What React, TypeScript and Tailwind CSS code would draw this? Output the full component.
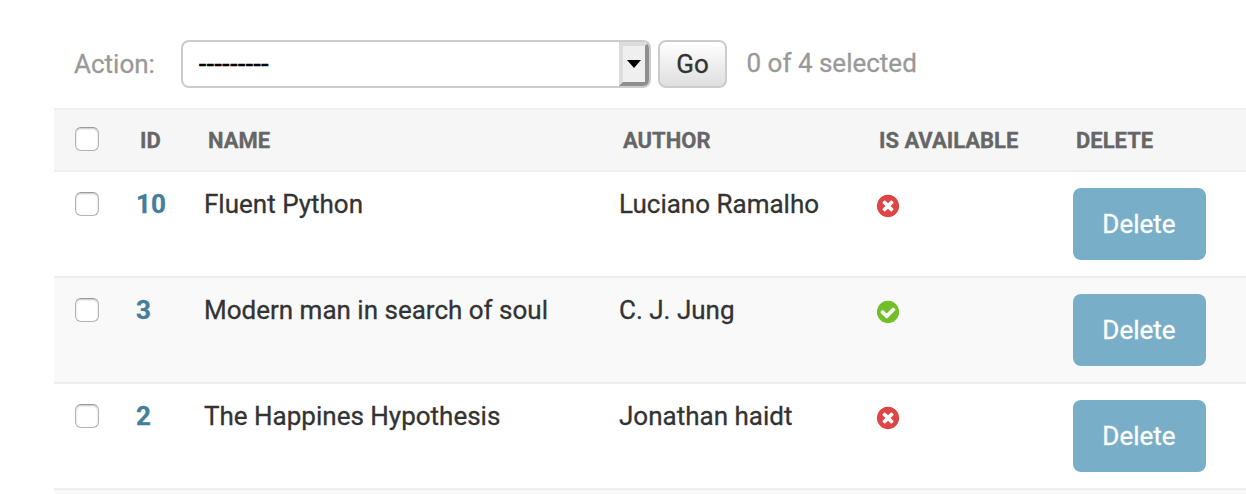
const BOOKS = [
  { id: 10, name: 'Fluent Python', author: 'Luciano Ramalho', available: false },
  { id: 3, name: 'Modern man in search of soul', author: 'C. J. Jung', available: true },
  { id: 2, name: 'The Happines Hypothesis', author: 'Jonathan haidt', available: false },
];

const COLUMNS = 'grid grid-cols-[82px_68px_415px_256px_198px_1fr]';

const DISC =
  'q0 209-103 385.5t-279.5 279.5-385.5 103-385.5-103-279.5-279.5-103-385.5 103-385.5 279.5-279.5 385.5-103 385.5 103 279.5 279.5 103 385.5z';
const CHECK =
  'M1412 734q0-28-18-46l-91-90q-19-19-45-19t-45 19l-408 407-226-226q-19-19-45-19t-45 19l-91 90q-18 18-18 46 0 27 18 45l362 362q19 19 45 19 27 0 46-19l543-543q18-18 18-45zm252 162' + DISC;
const CROSS =
  'M1277 1122q0-26-19-45l-181-181 181-181q19-19 19-45 0-27-19-46l-90-90q-19-19-46-19-26 0-45 19l-181 181-181-181q-19-19-45-19-27 0-46 19l-90 90q-19 19-19 46 0 26 19 45l181 181-181 181q-19 19-19 45 0 27 19 46l90 90q19 19 46 19 26 0 45-19l181-181 181 181q19 19 45 19 27 0 46-19l90-90q19-19 19-46zm387-226' + DISC;

function StatusIcon({ on }: { on: boolean }) {
  return (
    <svg viewBox="0 0 1792 1792" className="mt-[21px] size-[26px]" role="img" aria-label={on ? 'True' : 'False'}>
      <path fill={on ? '#70bf2b' : '#dd4646'} d={on ? CHECK : CROSS} />
    </svg>
  );
}

function Checkbox() {
  return (
    <input
      type="checkbox"
      className="ml-[21px] block size-6 appearance-none rounded-[6px] border border-[#b3b3b3] border-t-[#999] bg-white shadow-[inset_0_1px_2px_rgba(0,0,0,0.22)]"
    />
  );
}

export default function App() {
  return (
    <div className="h-[494px] overflow-hidden bg-white pl-[54px] font-['Roboto',sans-serif] text-[26px] leading-[30px] text-[#333] [-webkit-text-stroke:0.3px]">
      <div className="flex h-[108px] items-start pt-10 pl-5 text-[#999]">
        <span className="mt-[9px] w-[107px]">Action:</span>
        <div className="flex h-12 w-[470px] overflow-hidden rounded-[8px] border-2 border-[#ccc] bg-white">
          <span className="flex-1 pt-[7px] pl-4 tracking-[0.6px] text-black [-webkit-text-stroke:0.7px]">---------</span>
          <span className="flex w-[30px] items-center justify-center border-4 border-t-[#dcdcdc] border-r-[#8e8e8e] border-b-[#8e8e8e] border-l-[#dcdcdc] bg-[#efefef]">
            <svg viewBox="0 0 14 8" className="h-2 w-[14px]">
              <path d="M0 0h14L7 8z" fill="#000" />
            </svg>
          </span>
        </div>
        <button className="ml-[7px] h-12 w-[69px] rounded-[8px] border-2 border-[#ccc] bg-linear-to-b from-white to-[#dfdfdf] text-[#333]">
          Go
        </button>
        <span className="mt-2 ml-[19.5px]">0 of 4 selected</span>
      </div>

      <div className={`${COLUMNS} h-16 items-center border-y-2 border-[#eee] bg-[#f6f6f6] text-[22px] font-bold text-[#666]`}>
        <div className="pb-[2px]">
          <Checkbox />
        </div>
        <span className="pt-[2px] pl-1">ID</span>
        <span className="pt-[2px] pl-1">NAME</span>
        <span className="pt-[2px] pl-1">AUTHOR</span>
        <span className="pt-[2px] pl-1">IS AVAILABLE</span>
        <span className="pt-[2px] pl-[3px]">DELETE</span>
      </div>

      <div>
        {BOOKS.map((book) => (
          <div key={book.id} className={`${COLUMNS} h-[106px] items-start border-b-2 border-[#eee] odd:bg-white even:bg-[#f9f9f9]`}>
            <div className="pt-5">
              <Checkbox />
            </div>
            <a className="pt-[17px] font-bold text-[#447e9b]">{book.id}</a>
            <span className="pt-[17px]">{book.name}</span>
            <span className="pt-[17px]">{book.author}</span>
            <StatusIcon on={book.available} />
            <button className="mt-4 h-[72px] w-[133px] rounded-[8px] bg-[#79aec8] pr-px text-white">Delete</button>
          </div>
        ))}
      </div>
      <div className="h-1 bg-[#f9f9f9]" />
    </div>
  );
}
